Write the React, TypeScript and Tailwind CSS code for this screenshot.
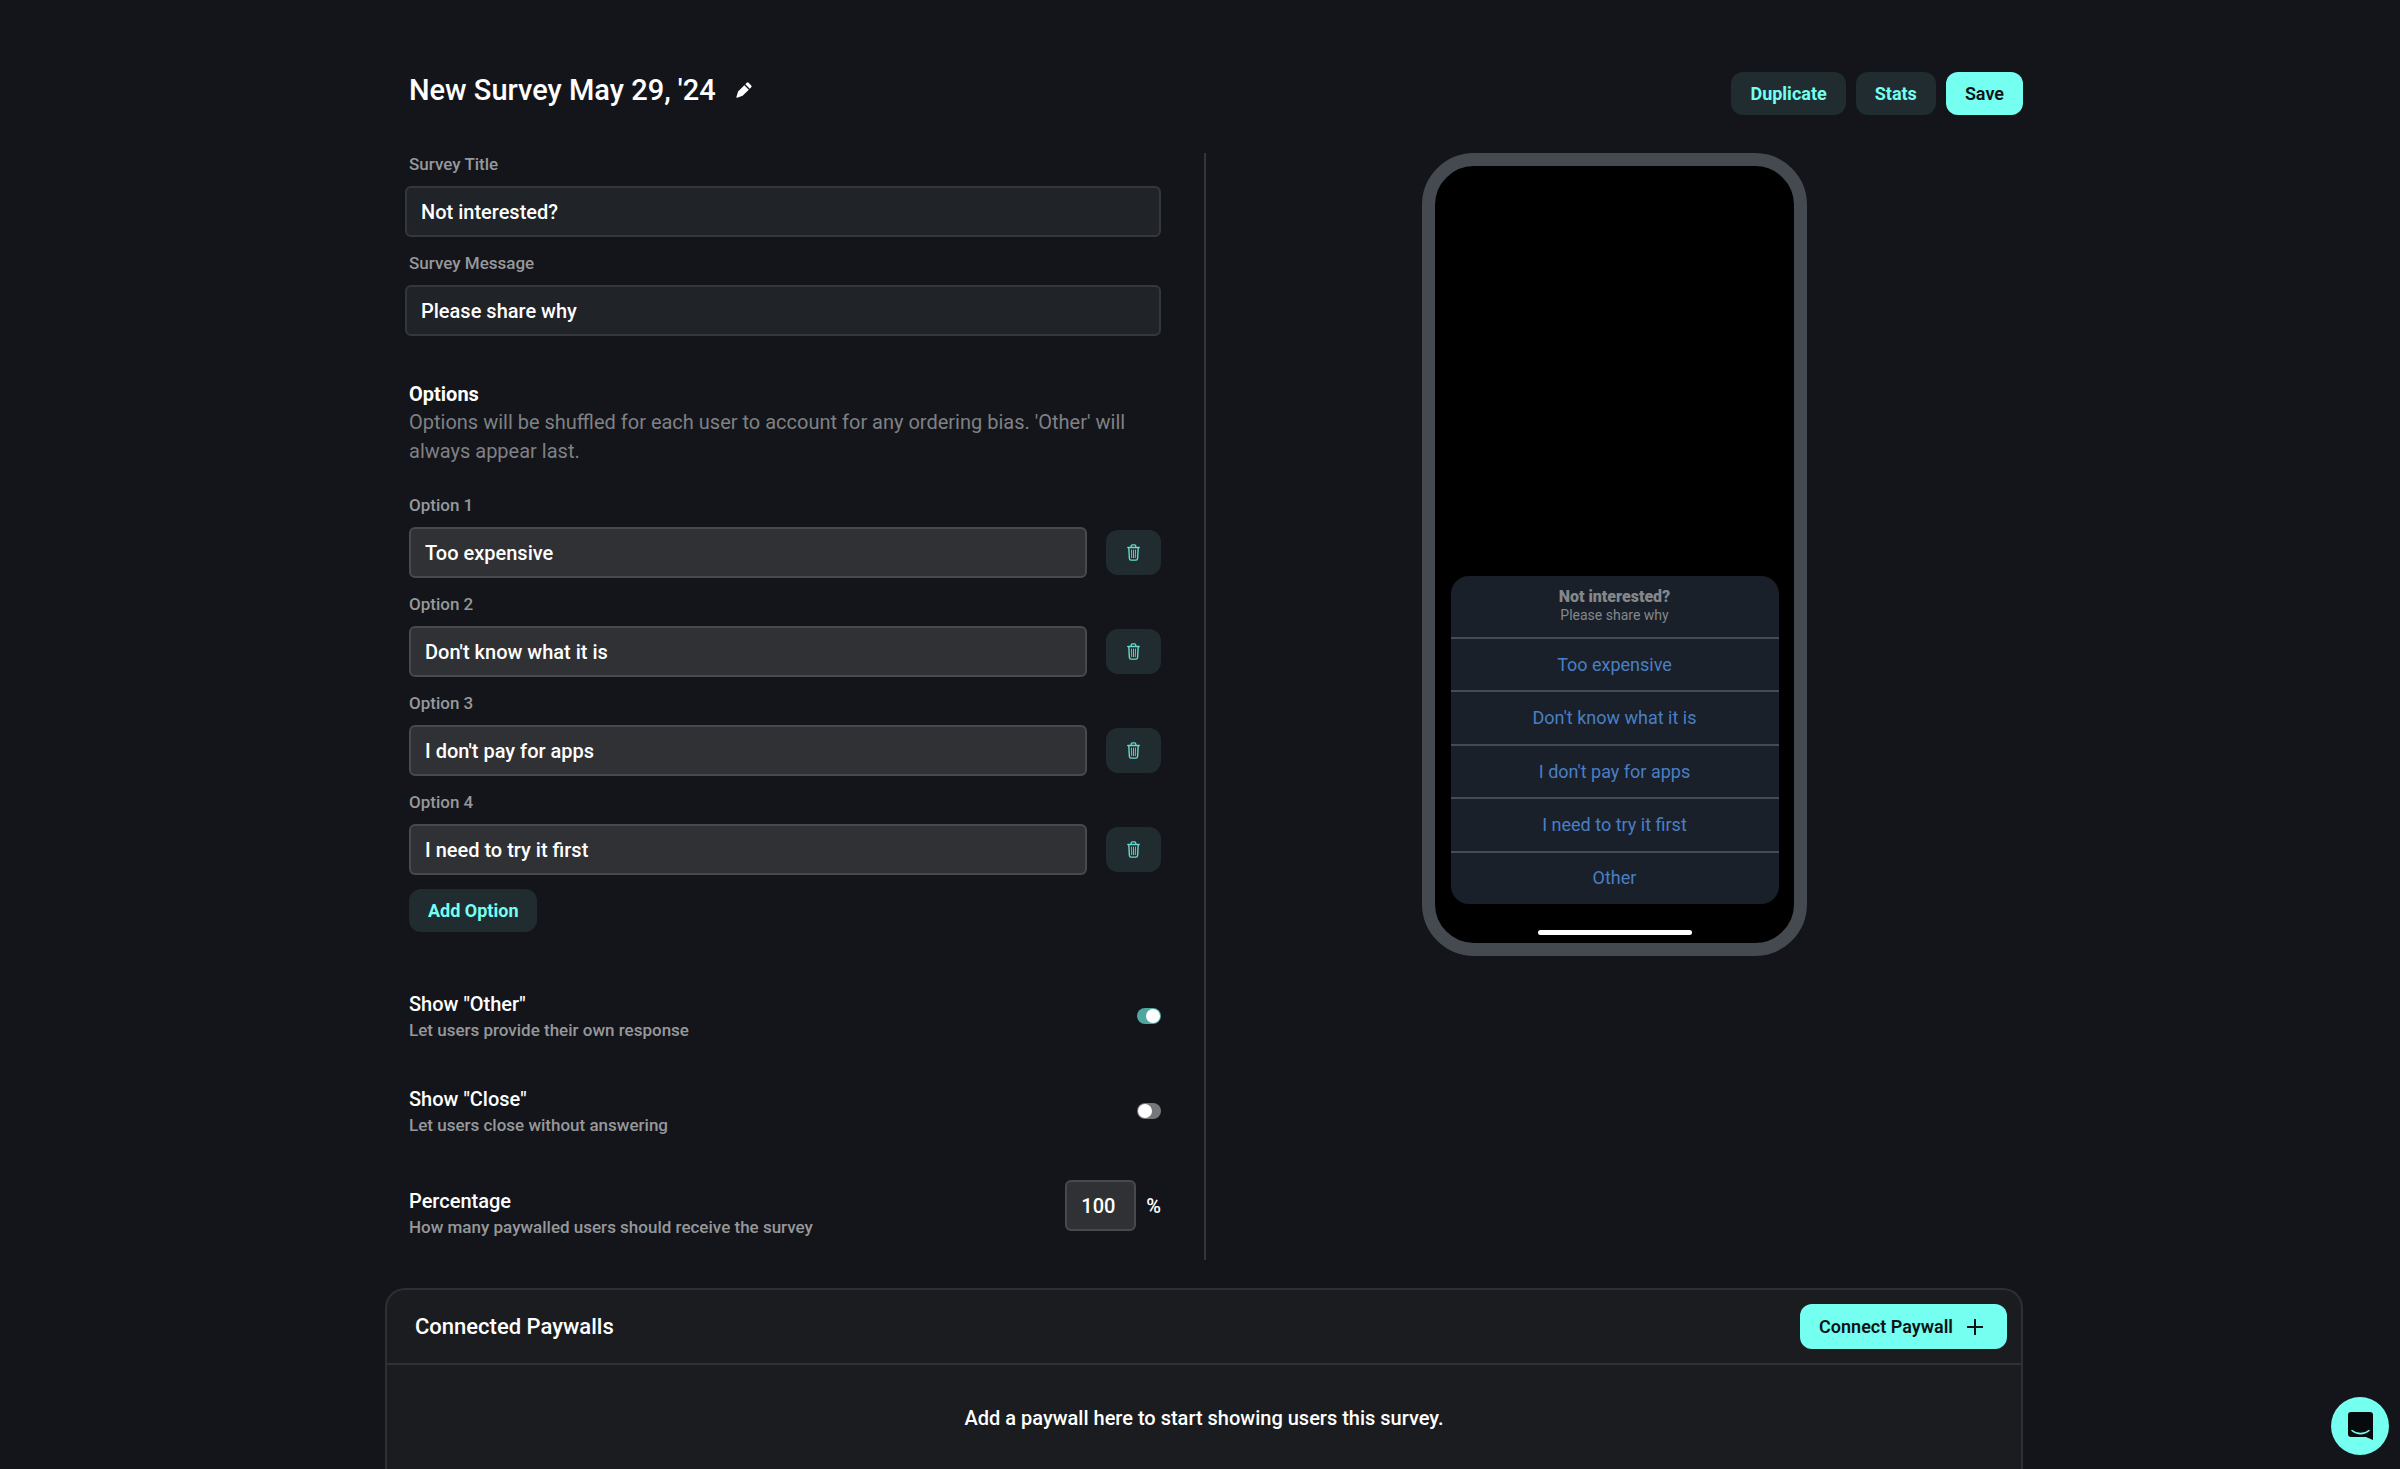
import { useState } from "react";

type TOption = {
  id: number;
  value: string;
};

type TToggleRowProps = {
  id: string;
  title: string;
  desc: string;
  checked: boolean;
  onChange: (checked: boolean) => void;
};

const initialOptions: TOption[] = [
  { id: 1, value: "Too expensive" },
  { id: 2, value: "Don't know what it is" },
  { id: 3, value: "I don't pay for apps" },
  { id: 4, value: "I need to try it first" },
];

const PencilIcon = () => (
  <svg viewBox="0 0 16 16" className="size-4" fill="currentColor">
    <path d="M8.3 3.2 12.8 7.7 6.6 13.7 1.1 15.7Q.2 15.9.4 15L2.1 9.4Z" />
    <path d="M9.3 2.2 10.8.8a1.3 1.3 0 0 1 1.8 0L15.2 3.4a1.3 1.3 0 0 1 0 1.8L13.8 6.7Z" />
  </svg>
);

const TrashIcon = () => (
  <svg
    viewBox="0 0 13 17"
    className="h-[17px] w-[13px]"
    fill="none"
    stroke="currentColor"
    strokeLinecap="round"
    strokeLinejoin="round"
  >
    <path d="M.8 3.5h11.4" strokeWidth="1.5" />
    <path
      d="M4.2 3.2V2.2C4.2 1.4 4.7.9 5.5.9h2c.8 0 1.3.5 1.3 1.3v1"
      strokeWidth="1.3"
    />
    <path
      d="M1.8 3.7 2.4 14.5c.1 1 .7 1.6 1.6 1.6h5c.9 0 1.5-.6 1.6-1.6L11.2 3.7"
      strokeWidth="1.4"
    />
    <path d="M4.5 6l.2 7.7M6.5 6v7.7M8.5 6l-.2 7.7" strokeWidth=".9" />
  </svg>
);

const ChatIcon = () => (
  <svg viewBox="0 0 25 28" className="h-7 w-[25px]">
    <path
      d="M3 0h19a3 3 0 0 1 3 3v25l-7-3H3a3 3 0 0 1-3-3V3a3 3 0 0 1 3-3Z"
      fill="#060a0c"
    />
    <path
      d="M4 18.5c5 4.2 12 4.2 17 0"
      fill="none"
      stroke="#74fff0"
      strokeWidth="1.6"
      strokeLinecap="round"
    />
  </svg>
);

const ToggleRow = ({ id, title, desc, checked, onChange }: TToggleRowProps) => {
  return (
    <div className="flex items-center justify-between">
      <label htmlFor={id}>
        <span className="block text-[20px] leading-7 text-white">{title}</span>
        <span className="block text-[17px] leading-6 text-[#96989b]">
          {desc}
        </span>
      </label>
      <input
        id={id}
        type="checkbox"
        checked={checked}
        onChange={(e) => onChange(e.target.checked)}
        className="flex h-4 w-6 appearance-none items-center rounded-full bg-[#76777a] px-px before:size-3.5 before:rounded-full before:bg-white checked:justify-end checked:bg-[#4fa79f]"
      />
    </div>
  );
};

const PhonePreview = ({
  title,
  message,
  options,
}: {
  title: string;
  message: string;
  options: string[];
}) => {
  return (
    <div className="flex h-[803px] w-[385px] flex-col items-center justify-end rounded-[52px] border-[13px] border-[#454a50] bg-black pb-2 font-normal">
      <div className="flex h-[328px] w-[328px] flex-col overflow-hidden rounded-[18px] bg-[#19202a] text-center">
        <div className="flex h-[61px] flex-col items-center pt-[11px]">
          <p className="text-[16px] leading-[19px] font-black text-[#85878a]">
            {title}
          </p>
          <p className="text-[14px] leading-[19px] text-[#85878a]">{message}</p>
        </div>
        {options.map((option) => (
          <p
            key={option}
            className="flex flex-1 items-center justify-center border-t-2 border-[#434b54] text-[18px] leading-6 text-[#4a7fc4]"
          >
            {option}
          </p>
        ))}
      </div>
      <div className="mt-[26px] h-[5px] w-[154px] rounded-full bg-white" />
    </div>
  );
};

const App = () => {
  const [title, setTitle] = useState("Not interested?");
  const [message, setMessage] = useState("Please share why");
  const [options, setOptions] = useState<TOption[]>(initialOptions);
  const [showOther, setShowOther] = useState(true);
  const [showClose, setShowClose] = useState(false);
  const [percentage, setPercentage] = useState("100");

  const previewOptions = options.map((option) => option.value);
  if (showOther) previewOptions.push("Other");

  return (
    <div className="min-h-screen bg-[#14151a] pl-2 font-['Roboto',sans-serif] font-medium text-white">
      <div className="mx-auto flex min-h-screen max-w-[1638px] flex-col">
        <header className="flex items-start justify-between pt-[72px] pl-6">
          <div className="flex items-center gap-5">
            <h1 className="text-[29px] leading-9">New Survey May 29, '24</h1>
            <button aria-label="Rename survey">
              <PencilIcon />
            </button>
          </div>
          <div className="flex gap-2.5 text-[18px] font-semibold">
            <button className="h-[43px] rounded-xl bg-[#202c2f] px-[19px] font-bold text-[#74fff0]">
              Duplicate
            </button>
            <button className="h-[43px] rounded-xl bg-[#202c2f] px-[19px] font-bold text-[#74fff0]">
              Stats
            </button>
            <button className="h-[43px] rounded-xl bg-[#74fff0] px-[19px] text-[#101417]">
              Save
            </button>
          </div>
        </header>

        <main className="mt-[38px] grid grid-cols-2">
          <section className="pr-[43px] pb-[21px] pl-5">
            <div>
              <label
                htmlFor="title"
                className="block pl-1 text-[17px] leading-[22px] text-[#96989b]"
              >
                Survey Title
              </label>
              <input
                id="title"
                value={title}
                onChange={(e) => setTitle(e.target.value)}
                className="mt-[11px] block h-[51px] w-full rounded-md border-2 border-[#34373b] bg-[#202327] px-3.5 text-[20px]"
              />
              <label
                htmlFor="message"
                className="mt-[15px] block pl-1 text-[17px] leading-[22px] text-[#96989b]"
              >
                Survey Message
              </label>
              <input
                id="message"
                value={message}
                onChange={(e) => setMessage(e.target.value)}
                className="mt-[11px] block h-[51px] w-full rounded-md border-2 border-[#34373b] bg-[#202327] px-3.5 text-[20px]"
              />
            </div>

            <div className="mt-11 pl-1">
              <h2 className="text-[20px] leading-7 font-bold">Options</h2>
              <p className="text-[20px] leading-[29px] font-normal text-[#7f8184]">
                Options will be shuffled for each user to account for any
                ordering bias. 'Other' will always appear last.
              </p>
              <div className="mt-7 flex flex-col gap-[15px]">
                {options.map((option, index) => (
                  <div key={option.id}>
                    <label
                      htmlFor={`option-${option.id}`}
                      className="block text-[17px] leading-[22px] text-[#96989b]"
                    >
                      Option {index + 1}
                    </label>
                    <div className="mt-[11px] flex items-center gap-[19px]">
                      <input
                        id={`option-${option.id}`}
                        value={option.value}
                        onChange={(e) =>
                          setOptions(
                            options.map((item) =>
                              item.id === option.id
                                ? { ...item, value: e.target.value }
                                : item,
                            ),
                          )
                        }
                        className="h-[51px] min-w-0 flex-1 rounded-md border-2 border-[#46494d] bg-[#303134] px-3.5 text-[20px]"
                      />
                      <button
                        aria-label={`Delete option ${index + 1}`}
                        onClick={() =>
                          setOptions(
                            options.filter((item) => item.id !== option.id),
                          )
                        }
                        className="flex h-[45px] w-[55px] items-center justify-center rounded-xl bg-[#202c2f] text-[#62dccf]"
                      >
                        <TrashIcon />
                      </button>
                    </div>
                  </div>
                ))}
              </div>
              <button
                onClick={() =>
                  setOptions([...options, { id: Date.now(), value: "" }])
                }
                className="mt-[14px] h-[43px] rounded-xl bg-[#202c2f] px-[19px] text-[18px] font-bold text-[#74fff0]"
              >
                Add Option
              </button>
            </div>

            <div className="mt-[58px] flex flex-col gap-[43px] pl-1">
              <ToggleRow
                id="show-other"
                title={'Show "Other"'}
                desc="Let users provide their own response"
                checked={showOther}
                onChange={setShowOther}
              />
              <ToggleRow
                id="show-close"
                title={'Show "Close"'}
                desc="Let users close without answering"
                checked={showClose}
                onChange={setShowClose}
              />
              <div className="flex items-start justify-between">
                <label htmlFor="percentage" className="pt-[7px]">
                  <span className="block text-[20px] leading-7">
                    Percentage
                  </span>
                  <span className="block text-[17px] leading-6 text-[#96989b]">
                    How many paywalled users should receive the survey
                  </span>
                </label>
                <div className="flex items-center gap-2.5 text-[20px]">
                  <input
                    id="percentage"
                    value={percentage}
                    onChange={(e) => setPercentage(e.target.value)}
                    className="h-[51px] w-[71px] rounded-md border-2 border-[#46494d] bg-[#303134] px-3.5"
                  />
                  <span>%</span>
                </div>
              </div>
            </div>
          </section>

          <section className="flex items-start justify-center border-l-2 border-[#323539]">
            <PhonePreview
              title={title}
              message={message}
              options={previewOptions}
            />
          </section>
        </main>

        <section className="mt-7 flex-1 rounded-t-[20px] border-2 border-b-0 border-[#2c2f33] bg-[#1a1c1f]">
          <div className="flex h-[75px] items-center justify-between border-b-2 border-[#2c3236] pr-3.5 pl-7">
            <h2 className="text-[22px] leading-7">Connected Paywalls</h2>
            <button className="flex h-[45px] items-center gap-3.5 rounded-xl bg-[#74fff0] pr-6 pl-[19px] text-[18px] font-semibold text-[#101417]">
              Connect Paywall
              <svg
                viewBox="0 0 16 16"
                className="size-4"
                stroke="currentColor"
                strokeWidth="2"
              >
                <path d="M8 0v16M0 8h16" />
              </svg>
            </button>
          </div>
          <p className="pt-[39px] text-center text-[20px] leading-7">
            Add a paywall here to start showing users this survey.
          </p>
        </section>
      </div>

      <button
        aria-label="Open chat"
        className="fixed right-[11px] bottom-3.5 flex size-[58px] items-center justify-center rounded-full bg-[#74fff0]"
      >
        <ChatIcon />
      </button>
    </div>
  );
};

export default App;
